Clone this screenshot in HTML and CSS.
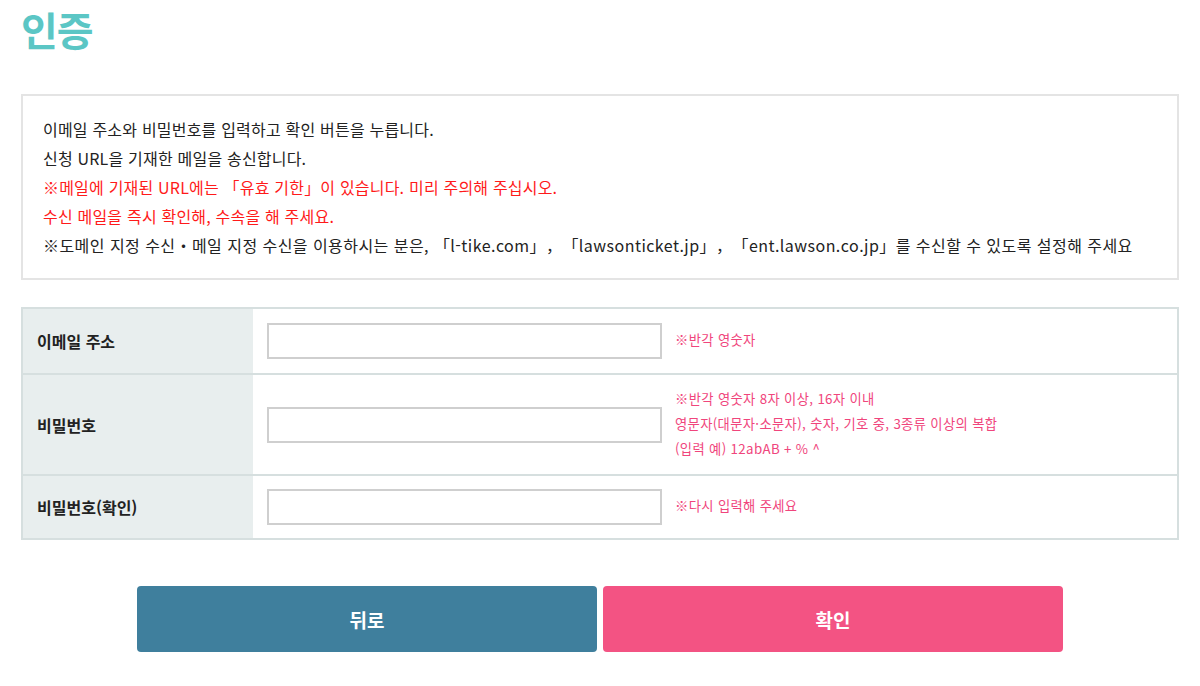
FILE: index.html
```html
<!DOCTYPE html>
<html lang="ko">
<head>
<meta charset="utf-8">
<title>인증</title>
<link rel="stylesheet" href="styles.css">
</head>
<body>
<h1 class="title">인증</h1>
<div class="info">
  <p>이메일 주소와 비밀번호를 입력하고 확인 버튼을 누릅니다.</p>
  <p>신청 URL을 기재한 메일을 송신합니다.</p>
  <p class="red">※메일에 기재된 URL에는 「유효 기한」이 있습니다. 미리 주의해 주십시오.</p>
  <p class="red">수신 메일을 즉시 확인해, 수속을 해 주세요.</p>
  <p class="domains">※도메인 지정 수신・메일 지정 수신을 이용하시는 분은, 「l-tike.com」，「lawsonticket.jp」，「ent.lawson.co.jp」를 수신할 수 있도록 설정해 주세요</p>
</div>
<div class="form">
  <div class="row row-short">
    <div class="label">이메일 주소</div>
    <div class="field">
      <input class="input" type="text">
      <div class="note">※반각 영숫자</div>
    </div>
  </div>
  <div class="row row-tall">
    <div class="label">비밀번호</div>
    <div class="field">
      <input class="input" type="password">
      <div class="note">
        <p>※반각 영숫자 8자 이상, 16자 이내</p>
        <p>영문자(대문자·소문자), 숫자, 기호 중, 3종류 이상의 복합</p>
        <p>(입력 예) 12abAB + % ^</p>
      </div>
    </div>
  </div>
  <div class="row row-short">
    <div class="label">비밀번호(확인)</div>
    <div class="field">
      <input class="input" type="password">
      <div class="note">※다시 입력해 주세요</div>
    </div>
  </div>
</div>
<div class="buttons">
  <button class="btn btn-back">뒤로</button>
  <button class="btn btn-ok">확인</button>
</div>
</body>
</html>
```

FILE: styles.css
```css
* { box-sizing: border-box; }
html, body { margin: 0; padding: 0; background: #fff; }
body {
  padding: 0 21px 0 21px;
  font-family: "Noto Sans CJK KR", "Noto Sans", sans-serif;
  color: #222;
  text-spacing-trim: space-all;
}
p { margin: 0; }
.title {
  margin: 8px 0 0 0;
  font-size: 40px;
  line-height: 42px;
  font-weight: 700;
  color: #5bc6c5;
  letter-spacing: -1px;
}
.info {
  margin-top: 44px;
  border: 2px solid #e4e4e4;
  padding: 19px 20px 18px 20px;
  font-size: 16px;
  line-height: 29px;
  letter-spacing: 0.2px;
  color: #222;
}
.info .red { color: #ff1a1a; }
.info .domains { letter-spacing: 0.45px; }
.form {
  margin-top: 27px;
  border: 2px solid #d6dfdf;
}
.row {
  display: flex;
  border-top: 2px solid #d6dfdf;
}
.row:first-child { border-top: none; }
.row-short { height: 64px; }
.row-tall { height: 101px; }
.label {
  width: 230px;
  flex: none;
  background: #e8eeee;
  display: flex;
  align-items: center;
  padding-left: 14px;
  font-size: 16px;
  font-weight: 700;
  color: #222;
}
.field {
  flex: 1;
  display: flex;
  align-items: center;
  padding-left: 14px;
}
.input {
  width: 395px;
  height: 36px;
  border: 2px solid #cfcfcf;
  background: #fff;
  margin: 0;
  outline: none;
}
.note {
  margin-left: 13px;
  margin-top: -3px;
  font-size: 13.3px;
  line-height: 25px;
  letter-spacing: 0.35px;
  color: #f0457c;
}
.buttons {
  margin-top: 46px;
  display: flex;
  justify-content: center;
  gap: 6px;
}
.btn {
  width: 460px;
  height: 66px;
  border: none;
  border-radius: 4px;
  font-family: "Noto Sans CJK KR", "Noto Sans", sans-serif;
  font-size: 19px;
  font-weight: 700;
  color: #fff;
  cursor: pointer;
}
.btn-back { background: #3f7f9d; }
.btn-ok { background: #f35383; }
```
